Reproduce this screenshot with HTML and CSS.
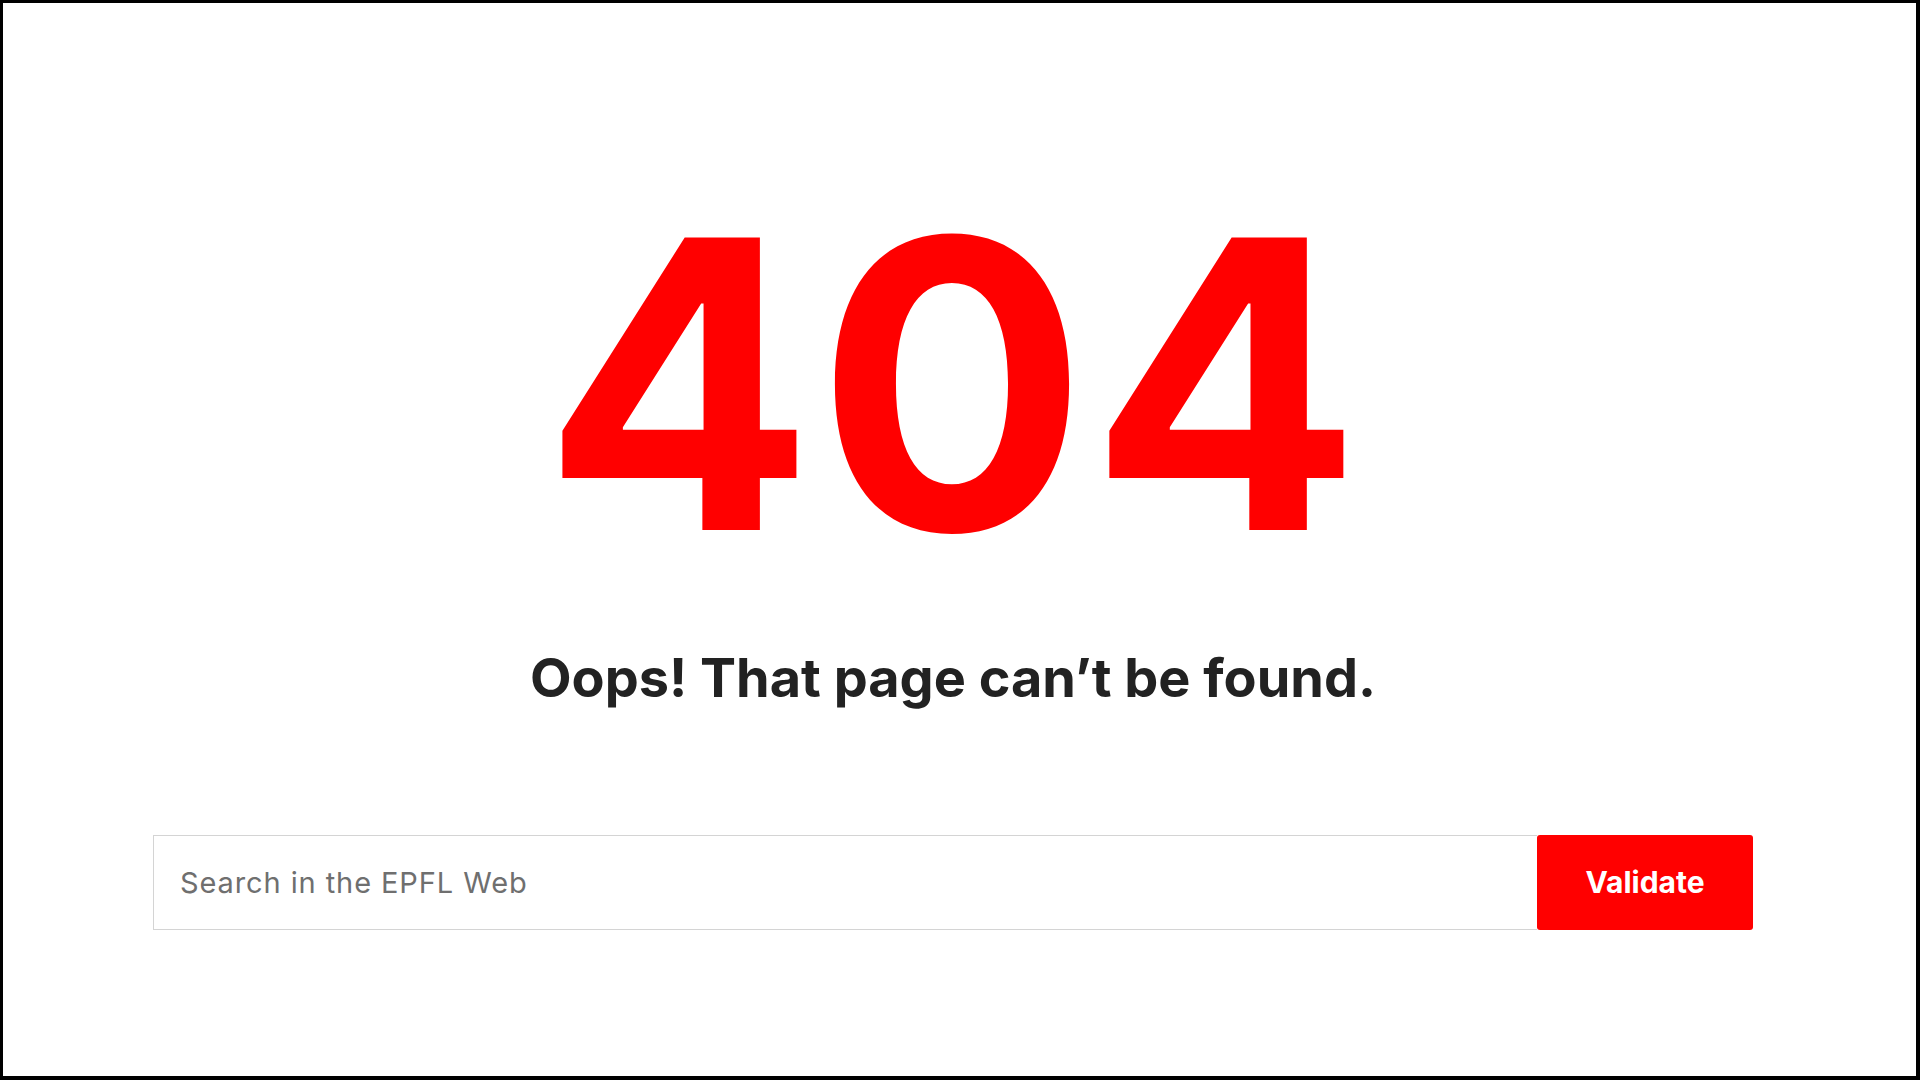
FILE: index.html
```html
<!DOCTYPE html>
<html lang="en">
<head>
<meta charset="utf-8">
<title>404 - EPFL</title>
<link rel="stylesheet" href="styles.css">
</head>
<body>
<div class="frame">
  <main class="page">
    <h1 class="code">404</h1>
    <p class="title">Oops! That page can’t be found.</p>
    <form class="search" onsubmit="return false">
      <input class="search-input" type="text" placeholder="Search in the EPFL Web">
      <button class="search-btn" type="submit">Validate</button>
    </form>
  </main>
</div>
</body>
</html>
```
FILE: styles.css
```css
html, body {
  margin: 0;
  padding: 0;
  background: #fff;
}

body {
  font-family: Inter, "Liberation Sans", Arial, sans-serif;
  color: #222;
}

.frame {
  box-sizing: border-box;
  width: 1920px;
  height: 1080px;
  border-style: solid;
  border-color: #000;
  border-width: 3px 4px 4px 3px;
  overflow: hidden;
}

.page {
  display: flex;
  flex-direction: column;
  align-items: center;
  padding: 180px 163px 0 150px;
}

.code {
  margin: 0;
  font-size: 402px;
  line-height: 1;
  font-weight: 700;
  color: #ff0000;
  letter-spacing: 2px;
}

.title {
  margin: 61px 0 0;
  font-size: 54px;
  line-height: 1.2;
  font-weight: 700;
  color: #222;
}

.search {
  margin-top: 124px;
  align-self: stretch;
  display: flex;
  height: 95px;
}

.search-input {
  flex: 1;
  min-width: 0;
  box-sizing: border-box;
  height: 95px;
  margin: 0;
  padding: 0 26px;
  border: 1px solid #d4d4d4;
  border-right: none;
  border-radius: 0;
  font-family: inherit;
  font-size: 29px;
  letter-spacing: 0.9px;
  color: #222;
  outline: none;
}

.search-input::placeholder {
  color: #6f6f6f;
  opacity: 1;
}

.search-btn {
  box-sizing: border-box;
  width: 216px;
  height: 95px;
  margin: 0;
  border: none;
  border-radius: 3px;
  background: #ff0000;
  color: #fff;
  font-family: inherit;
  font-size: 30px;
  font-weight: 700;
  cursor: pointer;
}
```
